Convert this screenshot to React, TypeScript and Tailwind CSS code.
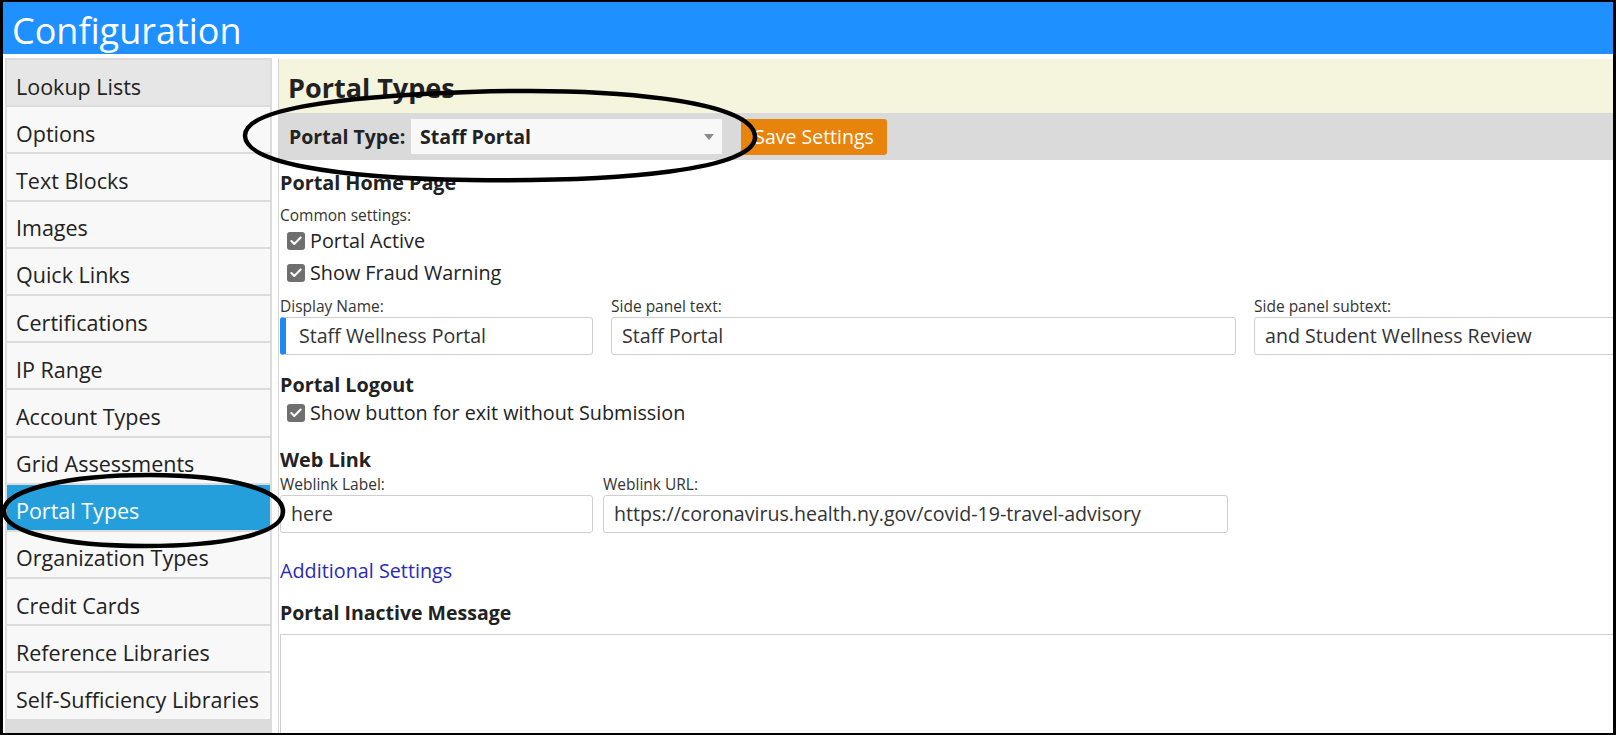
import { Check } from "lucide-react";

const menu = [
  "Lookup Lists",
  "Options",
  "Text Blocks",
  "Images",
  "Quick Links",
  "Certifications",
  "IP Range",
  "Account Types",
  "Grid Assessments",
  "Portal Types",
  "Organization Types",
  "Credit Cards",
  "Reference Libraries",
  "Self-Sufficiency Libraries",
];

function CheckRow({ label, className = "" }: { label: string; className?: string }) {
  return (
    <label className={`flex items-center pl-[7px] ${className}`}>
      <span className="flex h-[18px] w-[18px] items-center justify-center rounded-[3px] bg-[#6f6f6f]">
        <Check size={14} strokeWidth={3.5} className="text-white" />
      </span>
      <span className="ml-[5px] text-[19.8px] text-[#222]">{label}</span>
    </label>
  );
}

function Field({ label, value, className = "", marker = false }: { label: string; value: string; className?: string; marker?: boolean }) {
  return (
    <div className={className}>
      <div className="h-[18px] text-[15.5px] leading-[18px] text-[#333]">{label}</div>
      <div
        className={`mt-[2px] flex h-[38px] items-center overflow-hidden whitespace-nowrap rounded-[3px] border border-[#cfcfcf] bg-white pl-[10px] text-[19.6px] text-[#333] ${
          marker ? "border-l-[6px] border-l-[#1e88f5] pl-[13px]" : ""
        }`}
      >
        {value}
      </div>
    </div>
  );
}

export default function App() {
  return (
    <div
      className="relative h-[735px] w-[1616px] overflow-hidden border-y-2 border-x-[3px] border-black bg-white text-[#222]"
      style={{ fontFamily: '"Open Sans", "Noto Sans", sans-serif' }}
    >
      <header className="h-[52px] bg-[#1e90ff] pl-[9px] text-[36px] leading-[58px] text-white">Configuration</header>

      <div className="mt-[4px] flex">
        <nav className="ml-[2px] flex w-[267px] shrink-0 flex-col gap-[2px] bg-[#dcdcdc] p-[2px] pb-[20px]">
          {menu.map((item, i) => (
            <div
              key={item}
              className={`flex h-[45.2px] items-center whitespace-nowrap pl-[9px] pt-[8px] text-[21.5px] leading-[28px] ${
                item === "Portal Types" ? "bg-[#259fdb] text-white" : i === 0 ? "bg-[#e6e6e6]" : "bg-[#f8f8f8]"
              }`}
            >
              {item}
            </div>
          ))}
        </nav>

        <main className="ml-[6px] flex-1 border-l border-[#d6d6d6]">
          <div className="mt-[1px] flex h-[54px] items-center bg-[#f5f4dc] pl-[9px] pt-[4px] text-[27px] font-bold">Portal Types</div>

          <div className="flex h-[47px] items-center bg-[#dadada] pl-[10px]">
            <span className="w-[122px] shrink-0 text-[19.5px] font-bold">Portal Type:</span>
            <div className="flex h-[35px] w-[311px] shrink-0 items-center justify-between bg-[#f8f8f8] pl-[9px] pr-[8px]">
              <span className="text-[19.6px] font-bold">Staff Portal</span>
              <span className="h-0 w-0 border-x-[5px] border-t-[6px] border-x-transparent border-t-[#8a8a8a]" />
            </div>
            <button className="ml-[19px] h-[36px] w-[146px] shrink-0 rounded-[3px] bg-[#e8830b] text-[19.5px] text-white">Save Settings</button>
          </div>

          <div className="pl-[1px]">
            <h2 className="mt-[10px] h-[26px] text-[19.8px] font-bold leading-[26px]">Portal Home Page</h2>
            <div className="mt-[9px] h-[20px] text-[15.5px] leading-[20px] text-[#333]">Common settings:</div>
            <CheckRow label="Portal Active" className="h-[32px]" />
            <CheckRow label="Show Fraud Warning" className="h-[32px]" />

            <div className="mt-[8px] flex gap-[18px]">
              <Field label="Display Name:" value="Staff Wellness Portal" marker className="w-[313px] shrink-0" />
              <Field label="Side panel text:" value="Staff Portal" className="w-[625px] shrink-0" />
              <Field label="Side panel subtext:" value="and Student Wellness Review" className="w-[625px] shrink-0" />
            </div>

            <h2 className="mt-[17px] h-[25px] text-[19.8px] font-bold leading-[26px]">Portal Logout</h2>
            <CheckRow label="Show button for exit without Submission" className="h-[32px]" />

            <h2 className="mt-[18px] h-[26px] text-[19.8px] font-bold leading-[26px]">Web Link</h2>
            <div className="mt-[2px] flex gap-[10px]">
              <Field label="Weblink Label:" value="here" className="w-[313px] shrink-0" />
              <Field label="Weblink URL:" value="https://coronavirus.health.ny.gov/covid-19-travel-advisory" className="w-[625px] shrink-0" />
            </div>

            <a className="mt-[25px] block h-[26px] text-[19.8px] leading-[26px] text-[#2a2ab8]">Additional Settings</a>

            <h2 className="mt-[16px] h-[26px] text-[19.5px] font-bold leading-[26px]">Portal Inactive Message</h2>
            <div className="mt-[8px] h-[200px] border border-[#cfcfcf] bg-white" />
          </div>
        </main>
      </div>

      {/* hand-drawn callout rings */}
      <svg className="pointer-events-none absolute left-[-3px] top-[-2px]" width="1616" height="735" viewBox="0 0 1616 735" fill="none">
        <path
          d="M 470 92 C 610 87 752 100 755 136 C 758 170 620 182 470 180 C 330 178 246 162 245 136 C 244 110 330 97 470 92 Z"
          stroke="black"
          strokeWidth="4.5"
          strokeLinejoin="round"
        />
        <path
          d="M 150 475 C 230 475 284 490 283 512 C 282 535 220 546 145 546 C 65 546 4 533 4 511 C 4 489 70 475 150 475 Z"
          stroke="black"
          strokeWidth="4.5"
          strokeLinejoin="round"
        />
      </svg>
    </div>
  );
}
